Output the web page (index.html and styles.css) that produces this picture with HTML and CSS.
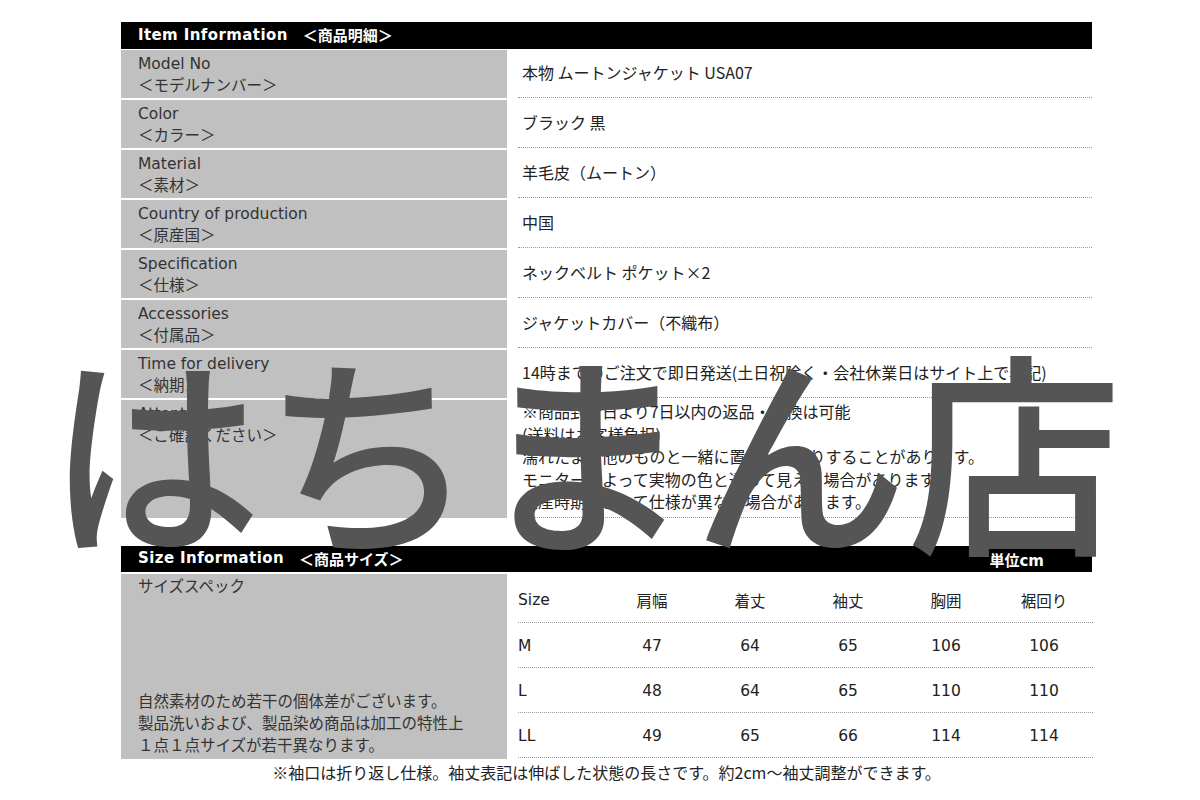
FILE: index.html
```html
<!DOCTYPE html>
<html lang="ja">
<head>
<meta charset="utf-8">
<title>Item Information</title>
<link rel="stylesheet" href="styles.css">
</head>
<body>
<div class="page">
  <div class="bar"><span class="title"><span class="en">Item Information</span><span class="jp">　＜商品明細＞</span></span></div>
  <div class="spec">
    <div class="row">
      <div class="label"><div>Model No</div><div>＜モデルナンバー＞</div></div>
      <div class="value">本物 ムートンジャケット USA07</div>
    </div>
    <div class="row">
      <div class="label"><div>Color</div><div>＜カラー＞</div></div>
      <div class="value">ブラック 黒</div>
    </div>
    <div class="row">
      <div class="label"><div>Material</div><div>＜素材＞</div></div>
      <div class="value">羊毛皮（ムートン）</div>
    </div>
    <div class="row">
      <div class="label"><div>Country of production</div><div>＜原産国＞</div></div>
      <div class="value">中国</div>
    </div>
    <div class="row">
      <div class="label"><div>Specification</div><div>＜仕様＞</div></div>
      <div class="value">ネックベルト ポケット×2</div>
    </div>
    <div class="row">
      <div class="label"><div>Accessories</div><div>＜付属品＞</div></div>
      <div class="value">ジャケットカバー（不織布）</div>
    </div>
    <div class="row">
      <div class="label"><div>Time for delivery</div><div>＜納期＞</div></div>
      <div class="value">14時までのご注文で即日発送(土日祝除く・会社休業日はサイト上で表記)</div>
    </div>
    <div class="row tall">
      <div class="label"><div>Attention</div><div>＜ご確認ください＞</div></div>
      <div class="value top">
        <div>※商品到着日より7日以内の返品・交換は可能</div>
        <div>(送料はお客様負担)</div>
        <div>濡れたまま他のものと一緒に置くと色移りすることがあります。</div>
        <div>モニターによって実物の色と違って見える場合があります。</div>
        <div>生産時期によって仕様が異なる場合があります。</div>
      </div>
    </div>
  </div>

  <div class="bar size-bar"><span class="title"><span class="en">Size Information</span><span class="jp">　＜商品サイズ＞</span></span><span class="unit">単位cm</span></div>
  <div class="size">
    <div class="size-label">
      <div>サイズスペック</div>
      <div>
        <div>自然素材のため若干の個体差がございます。</div>
        <div>製品洗いおよび、製品染め商品は加工の特性上</div>
        <div>１点１点サイズが若干異なります。</div>
      </div>
    </div>
    <div class="size-table">
      <div class="tr head">
        <div class="th first">Size</div><div class="th">肩幅</div><div class="th">着丈</div><div class="th">袖丈</div><div class="th">胸囲</div><div class="th">裾回り</div>
      </div>
      <div class="tr">
        <div class="td first">M</div><div class="td">47</div><div class="td">64</div><div class="td">65</div><div class="td">106</div><div class="td">106</div>
      </div>
      <div class="tr">
        <div class="td first">L</div><div class="td">48</div><div class="td">64</div><div class="td">65</div><div class="td">110</div><div class="td">110</div>
      </div>
      <div class="tr">
        <div class="td first">LL</div><div class="td">49</div><div class="td">65</div><div class="td">66</div><div class="td">114</div><div class="td">114</div>
      </div>
    </div>
  </div>
  <p class="note">※袖口は折り返し仕様。袖丈表記は伸ばした状態の長さです。約2cm〜袖丈調整ができます。</p>
</div>
<div class="watermark">はちまん店</div>
</body>
</html>
```
FILE: styles.css
```css
html, body {
  margin: 0;
  padding: 0;
  background: #fff;
}
body {
  width: 1200px;
  height: 800px;
  position: relative;
  overflow: hidden;
  font-family: "DejaVu Sans", "Noto Sans CJK JP", sans-serif;
  font-size: 16px;
  color: #222;
}
.page {
  width: 971px;
  margin: 22px 0 0 121px;
}
.bar {
  background: #000;
  color: #fff;
  height: 27px;
  display: flex;
  align-items: center;
  justify-content: space-between;
  padding: 0 48px 0 17px;
  font-weight: bold;
  font-size: 15px;
  margin-bottom: 1px;
}
.bar .title {
  display: flex;
  align-items: center;
  margin-top: -2px;
}
.bar .en {
  letter-spacing: 0.4px;
}
.bar .jp {
  font-family: "Noto Sans CJK JP", sans-serif;
  font-weight: 700;
}
.unit {
  font-family: "DejaVu Sans", "Noto Sans CJK JP", sans-serif;
  font-weight: 700;
  font-size: 15px;
}
.spec {
  display: flex;
  flex-direction: column;
  gap: 2px;
}
.row {
  display: grid;
  grid-template-columns: 386px 1fr;
  height: 48px;
}
.row.tall {
  height: 118px;
}
.label {
  background: #c0c0c0;
  color: #333;
  padding: 3px 17px 0;
  line-height: 22px;
  font-size: 15.5px;
}
.value {
  margin-left: 11px;
  padding-left: 4px;
  padding-bottom: 3px;
  border-bottom: 1px dotted #9a9a9a;
  display: flex;
  align-items: center;
  line-height: 22px;
  font-family: "Noto Sans CJK JP", sans-serif;
  font-size: 16px;
}
.value.top {
  flex-direction: column;
  align-items: flex-start;
  justify-content: flex-start;
  padding-top: 0;
  line-height: 22.5px;
}
.size-bar {
  margin-top: 28px;
  margin-bottom: 2px;
  height: 26px;
}
.size {
  display: grid;
  grid-template-columns: 386px 1fr;
  height: 185px;
}
.size-label {
  background: #c0c0c0;
  color: #333;
  padding: 0 17px 4px;
  line-height: 22px;
  font-family: "Noto Sans CJK JP", sans-serif;
  font-size: 15.5px;
  display: flex;
  flex-direction: column;
  justify-content: space-between;
}
.size-table {
  margin-left: 11px;
  display: flex;
  flex-direction: column;
  font-family: "DejaVu Sans", "Noto Sans CJK JP", sans-serif;
  font-size: 15.5px;
  color: #222;
}
.tr {
  display: grid;
  grid-template-columns: 85px repeat(5, 98px);
  height: 45px;
  border-bottom: 1px dotted #9a9a9a;
  box-sizing: border-box;
  align-items: center;
  padding-top: 2px;
}
.tr.head {
  height: 49px;
  padding-top: 4px;
}
.th, .td {
  text-align: center;
}
.th {
  font-family: "Noto Sans CJK JP", sans-serif;
}
.first {
  text-align: left;
}
.head .first {
  font-family: "DejaVu Sans", sans-serif;
}
.note {
  margin: 2px 0 0;
  text-align: center;
  line-height: 22px;
  font-family: "Noto Sans CJK JP", sans-serif;
  font-size: 16px;
  color: #222;
}
.watermark {
  position: absolute;
  left: 47px;
  top: 337px;
  font-family: "Noto Sans CJK JP", sans-serif;
  font-weight: 500;
  font-size: 215px;
  line-height: 1;
  color: #555;
  white-space: nowrap;
  pointer-events: none;
}
```
